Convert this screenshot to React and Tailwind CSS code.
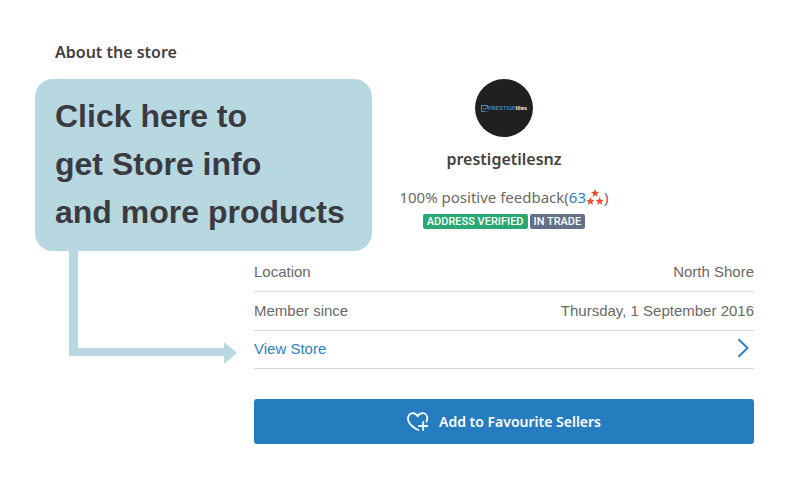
import React from "react";

const STAR = "M5 0 L6.4 3.4 L10 3.7 L7.3 6 L8.1 9.6 L5 7.7 L1.9 9.6 L2.7 6 L0 3.7 L3.6 3.4 Z";

function Avatar() {
  return (
    <div className="w-[58px] h-[58px] rounded-full bg-[#211f20] flex items-center justify-center font-['Roboto',sans-serif] text-[6px] leading-none">
      <svg className="w-[7px] h-[7px] shrink-0" viewBox="0 0 7 7" fill="none" stroke="#4a90c4">
        <path d="M6.5 3V.5H.5v6H4M2 3l1.500 1.500L6.500 3" />
        <path d="M5.5 6.5h1" />
      </svg>
      <span className="text-[#4a90c4] font-medium">PRESTIGE</span>
      <span className="text-[#e5e5e5] font-bold">tiles</span>
    </div>
  );
}

function FeedbackStars() {
  return (
    <svg className="w-[18px] h-[17px]" viewBox="0 0 18 17" fill="#ea5330">
      <path d={STAR} transform="translate(5 0) scale(.82)" />
      <path d={STAR} transform="translate(.3 8) scale(.82)" />
      <path d={STAR} transform="translate(9.600 8) scale(.82)" />
    </svg>
  );
}

function HeartPlus() {
  return (
    <svg
      className="w-[22px] h-5"
      viewBox="0 0 22 20"
      fill="none"
      stroke="currentColor"
      strokeWidth="1.8"
      strokeLinecap="round"
      strokeLinejoin="round"
    >
      <path d="M11.4 18C8.5 17.2 1 12 1 6.4 1 3.2 3.2 1.2 5.8 1.2c2.300 0 3.900 1.300 4.900 3.200 1-1.900 2.700-3.200 4.900-3.200 2.600 0 4.700 2 4.700 5.100 0 1.100-.300 2.200-.800 3.200" />
      <path d="M16.200 9.800v8.400M12 14h8.400" />
    </svg>
  );
}

// Note that sits over the seller panel, with an arrow to the store link
function Callout() {
  return (
    <div className="absolute left-[35px] top-[79px]">
      <p className="w-[337px] rounded-[18px] bg-[#b7d8e0] px-5 pt-[13px] pb-[15px] font-['Liberation_Sans',sans-serif] text-[32px] leading-[48px] font-bold text-[#3a3b40]">
        Click here to
        <br />
        get Store info
        <br />
        and more products
      </p>
      <svg className="ml-[34px] w-[168px] h-[113px]" viewBox="0 0 168 113" fill="#b7d8e0">
        <path d="M0 0h9v97h146v-6l13 11-13 11v-8H0z" />
      </svg>
    </div>
  );
}

function DetailRow({ label, value }) {
  return (
    <div className="flex items-center justify-between h-[39px] border-b border-[#d9d9d9]">
      <dt>{label}</dt>
      <dd>{value}</dd>
    </div>
  );
}

function App() {
  return (
    <main className="relative bg-white pt-10 pb-10 font-['Noto_Sans',sans-serif] text-[15px] text-[#6b6866]">
      <h2 className="pl-[55px] text-base leading-6 font-semibold text-[#44413f]">About the store</h2>

      <section className="ml-[254px] mr-[46px] mt-[15px]">
        <div className="flex flex-col items-center">
          <Avatar />
          <h3 className="mt-[10px] text-base leading-6 font-semibold text-[#44413f]">prestigetilesnz</h3>
          <p className="mt-[14px] flex items-center leading-6">
            100% positive feedback(
            <a href="#feedback" className="flex items-center text-[#2f7fc1]">
              63
              <FeedbackStars />
            </a>
            )
          </p>
          <div className="mt-[5px] flex gap-[2px] font-['Roboto',sans-serif] text-[11px] leading-[15px] font-medium text-white">
            <span className="rounded-[2px] bg-[#29a873] px-1">ADDRESS VERIFIED</span>
            <span className="rounded-[2px] bg-[#627187] px-1">IN TRADE</span>
          </div>
        </div>

        <div className="mt-6 font-['Liberation_Sans',sans-serif]">
          <dl>
            <DetailRow label="Location" value="North Shore" />
            <DetailRow label="Member since" value="Thursday, 1 September 2016" />
          </dl>
          <a
            href="#store"
            className="flex items-center justify-between h-[38px] border-b border-[#d9d9d9] text-[#2f7fc1]"
          >
            View Store
            <svg className="mr-[5px] mb-1 w-3 h-5" viewBox="0 0 12 20" fill="none" stroke="currentColor" strokeWidth="2">
              <path d="M1.500 1.200 10.500 10 1.500 18.800" />
            </svg>
          </a>
        </div>

        <button
          type="button"
          className="mt-[30px] flex w-full h-[45px] items-center justify-center gap-[10px] rounded-[3px] bg-[#257cbf] text-sm font-semibold text-white"
        >
          <HeartPlus />
          Add to Favourite Sellers
        </button>
      </section>

      <Callout />
    </main>
  );
}

export default App;
